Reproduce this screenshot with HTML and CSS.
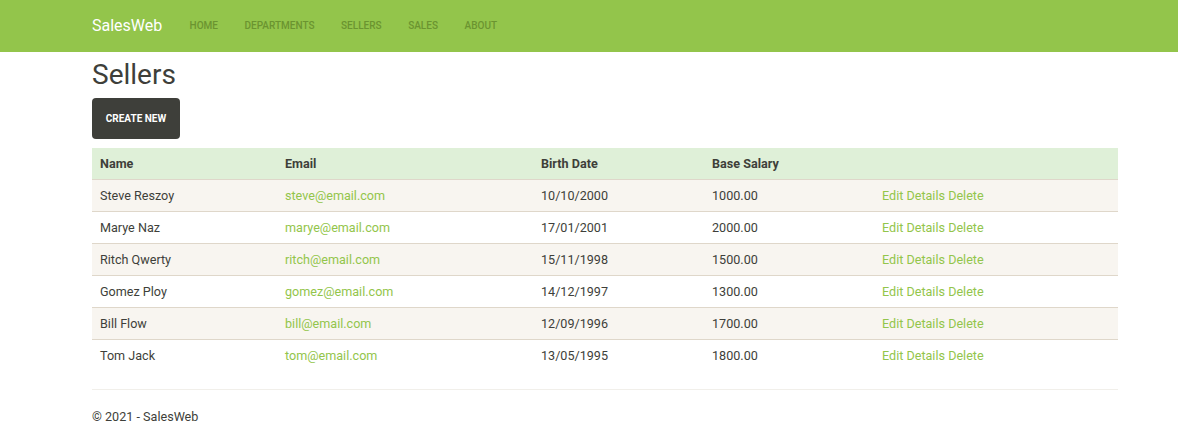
FILE: index.html
```html
<!DOCTYPE html>
<html>
<head>
<meta charset="utf-8">
<link rel="stylesheet" href="styles.css">
</head>
<body>
<nav class="navbar">
  <div class="nav-inner">
    <a class="brand" href="#">SalesWeb</a>
    <ul class="nav-links">
      <li><a href="#">Home</a></li>
      <li><a href="#">Departments</a></li>
      <li><a href="#">Sellers</a></li>
      <li><a href="#">Sales</a></li>
      <li><a href="#">About</a></li>
    </ul>
  </div>
</nav>
<main class="container">
  <h2 class="title">Sellers</h2>
  <a class="btn" href="#">Create New</a>
  <table class="table">
    <thead>
      <tr><th class="c-name">Name</th><th class="c-email">Email</th><th class="c-date">Birth Date</th><th class="c-sal">Base Salary</th><th></th></tr>
    </thead>
    <tbody>
      <tr><td>Steve Reszoy</td><td><a href="#">steve@email.com</a></td><td>10/10/2000</td><td>1000.00</td><td><a href="#">Edit</a> <a href="#">Details</a> <a href="#">Delete</a></td></tr>
      <tr><td>Marye Naz</td><td><a href="#">marye@email.com</a></td><td>17/01/2001</td><td>2000.00</td><td><a href="#">Edit</a> <a href="#">Details</a> <a href="#">Delete</a></td></tr>
      <tr><td>Ritch Qwerty</td><td><a href="#">ritch@email.com</a></td><td>15/11/1998</td><td>1500.00</td><td><a href="#">Edit</a> <a href="#">Details</a> <a href="#">Delete</a></td></tr>
      <tr><td>Gomez Ploy</td><td><a href="#">gomez@email.com</a></td><td>14/12/1997</td><td>1300.00</td><td><a href="#">Edit</a> <a href="#">Details</a> <a href="#">Delete</a></td></tr>
      <tr><td>Bill Flow</td><td><a href="#">bill@email.com</a></td><td>12/09/1996</td><td>1700.00</td><td><a href="#">Edit</a> <a href="#">Details</a> <a href="#">Delete</a></td></tr>
      <tr><td>Tom Jack</td><td><a href="#">tom@email.com</a></td><td>13/05/1995</td><td>1800.00</td><td><a href="#">Edit</a> <a href="#">Details</a> <a href="#">Delete</a></td></tr>
    </tbody>
  </table>
  <hr class="sep">
  <footer class="footer">&copy; 2021 - SalesWeb</footer>
</main>
</body>
</html>
```
FILE: styles.css
```css
* { box-sizing: border-box; }
html, body { margin: 0; padding: 0; }
body {
  font-family: Roboto, "Liberation Sans", sans-serif;
  font-size: 12.6px;
  line-height: 1.42857;
  color: #3e3f3a;
  background: #fff;
}
a { color: #93c54b; text-decoration: none; }

.navbar {
  background: #93c54b;
  height: 52px;
}
.nav-inner {
  margin-left: 92px;
  display: flex;
  align-items: center;
  height: 52px;
  padding-bottom: 0;
}
.brand {
  color: #fff;
  font-size: 16px;
  font-weight: 400;
  margin-right: 14px;
}
.nav-links {
  list-style: none;
  margin: 0;
  padding: 0;
  display: flex;
}
.nav-links a {
  display: block;
  padding: 0 13.3px;
  color: #6b9430;
  font-size: 10px;
  font-weight: 500;
  text-transform: uppercase;
}

.container {
  margin-left: 92px;
  width: 1026px;
}
.title {
  margin: 8px 0 7px;
  font-size: 28px;
  font-weight: 400;
  line-height: 1.1;
  color: #3e3f3a;
}
.btn {
  display: inline-block;
  width: 88px;
  height: 41px;
  line-height: 41px;
  text-align: center;
  background: #3e3f3a;
  color: #fff;
  border-radius: 4px;
  font-size: 10px;
  font-weight: 700;
  text-transform: uppercase;
}
.table {
  margin-top: 9px;
  width: 100%;
  border-collapse: collapse;
}
.table th, .table td {
  text-align: left;
  padding: 0 8px;
  height: 32px;
  vertical-align: middle;
}
.table th {
  background: #dff0d8;
  font-weight: 700;
  border-bottom: 1px solid #dfd7ca;
}
.table td { border-bottom: 1px solid #dfd7ca; }
.table tbody tr:nth-child(odd) td { background: #f8f5f0; }
.table tbody tr:last-child td { border-bottom: none; }
.c-name { width: 185px; }
.c-email { width: 256px; }
.c-date { width: 171px; }
.c-sal { width: 170px; }

.sep {
  margin: 17px 0 0;
  border: 0;
  border-top: 1px solid #f1efea;
}
.footer {
  padding-top: 18px;
  font-size: 12.6px;
}
```
